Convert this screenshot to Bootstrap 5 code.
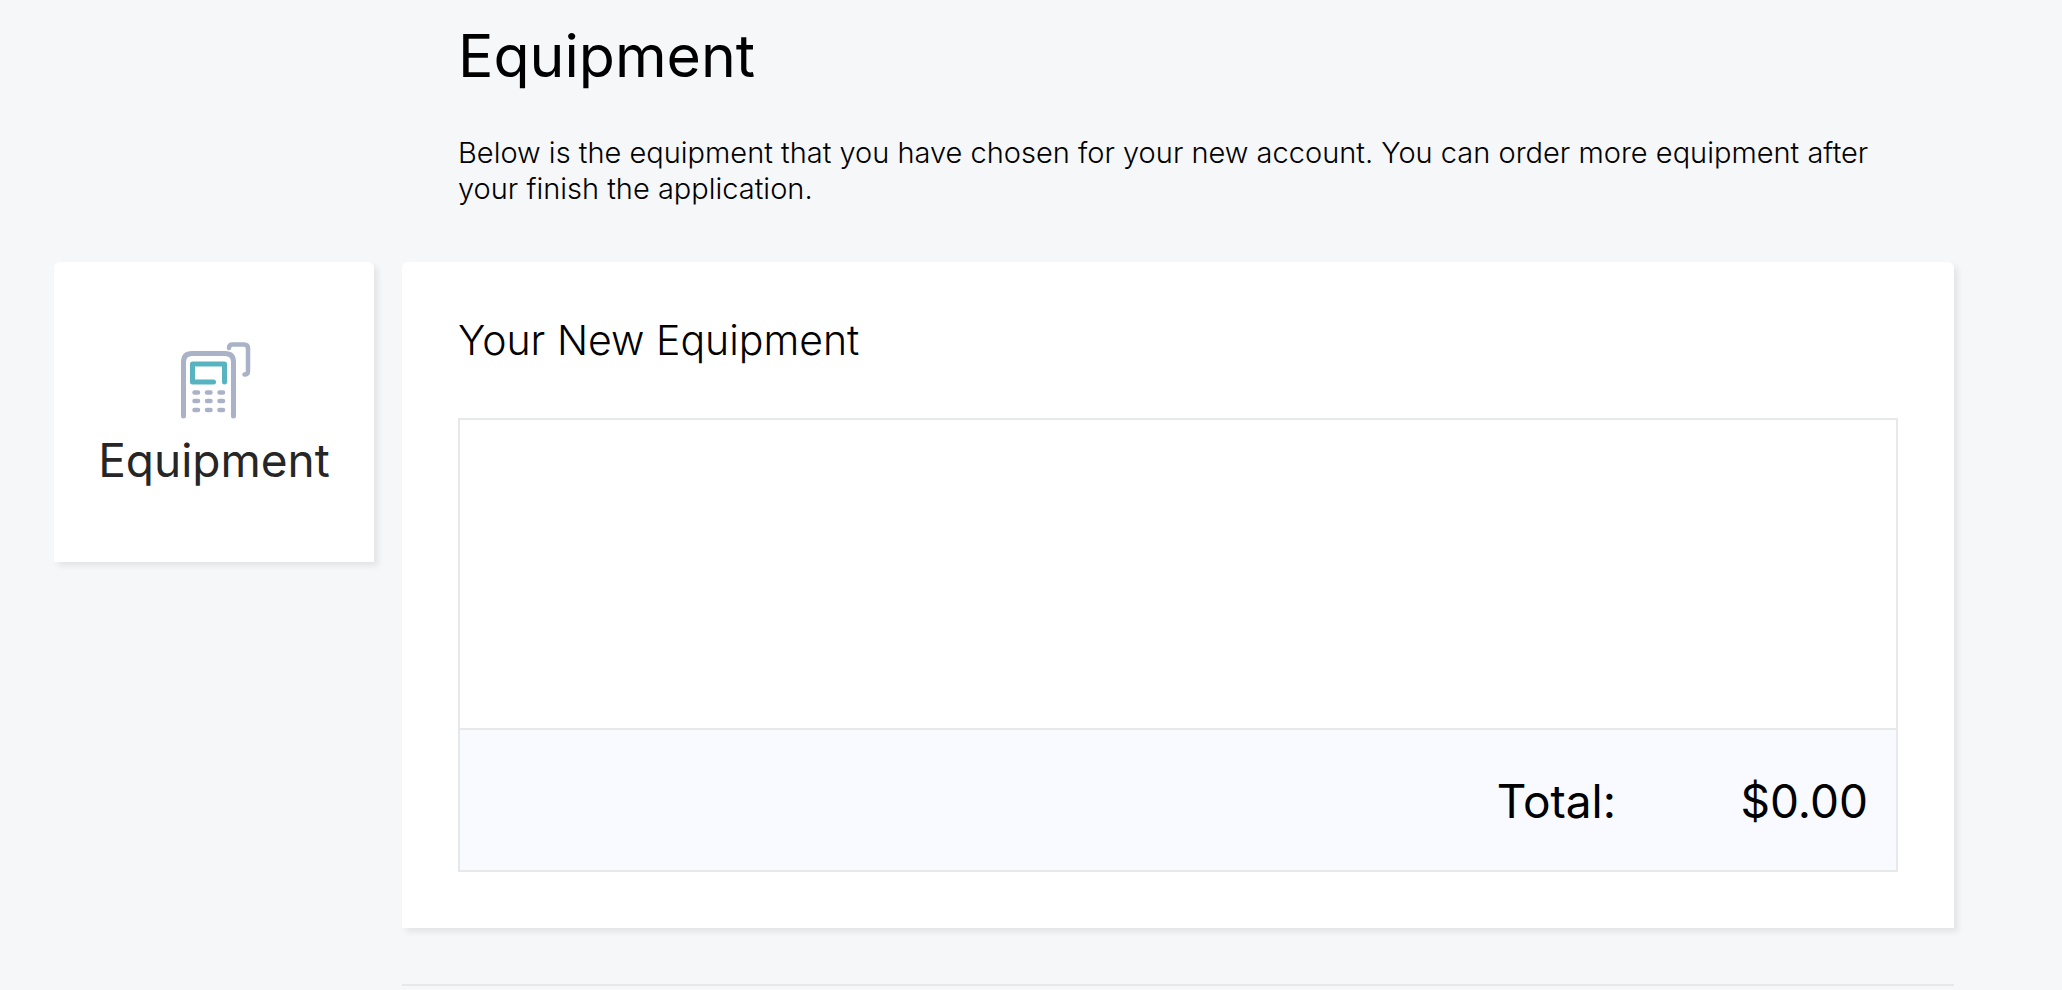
<!DOCTYPE html>
<html lang="en">
<head>
<meta charset="utf-8">
<meta name="viewport" content="width=device-width, initial-scale=1">
<title>Equipment</title>
<link rel="stylesheet" href="https://cdn.jsdelivr.net/npm/bootstrap@5.3.0/dist/css/bootstrap.min.css">
<style>
  body { background: #f5f7f9; color: #000; font-family: Inter, "Liberation Sans", sans-serif; font-weight: 300; }
  .page { padding: 20px 108px 0 54px; }
  .side-col { width: 320px; }
  .layout { gap: 28px; }
  .intro { padding: 0 56px; }
  .page-title { font-size: 59px; line-height: 72px; font-weight: 400; }
  .intro-text { font-size: 29px; line-height: 36px; margin-top: 43px; margin-bottom: 55px; }
  .panel { background: #fff; border-radius: 6px 6px 0 0; box-shadow: 4px 4px 6px rgba(0, 0, 0, .08); }
  .side-panel { height: 300px; padding-top: 6px; gap: 12px; color: #262626; font-size: 46px; line-height: 56px; font-weight: 400; }
  .main-panel { padding: 54px 56px 56px; }
  .panel-title { font-size: 41px; line-height: 48px; font-weight: 300; margin-bottom: 54px; }
  .order { border: 2px solid #e7e8ea; border-collapse: collapse; }
  .order .items td { height: 310px; }
  .order .total { height: 142px; border-top: 2px solid #e7e8ea; background: #f8faff; font-size: 46px; font-weight: 400; }
  .order .total th { font-weight: 400; padding-top: 4px; text-align: right; }
  .order .total td { width: 280px; padding-top: 4px; padding-right: 28px; text-align: right; }
  .rule { margin: 56px 0 0; border-top: 2px solid #e7e8ea; opacity: 1; }
</style>
</head>
<body>
<main class="page">
  <div class="layout d-flex">
    <div class="side-col flex-shrink-0"></div>
    <header class="intro flex-grow-1">
      <h1 class="page-title mb-0">Equipment</h1>
      <p class="intro-text">Below is the equipment that you have chosen for your new account. You can order more equipment after your finish the application.</p>
    </header>
  </div>
  <div class="layout d-flex align-items-start">
    <aside class="side-col side-panel panel flex-shrink-0 d-flex flex-column align-items-center justify-content-center">
      <svg width="74" height="78" viewBox="-4 0 74 78" fill="none" stroke="#aab2c8" stroke-width="5" stroke-linecap="round" aria-hidden="true">
        <path d="M2.500 74V20Q2.500 11.500 11 11.500H44Q52.500 11.500 52.500 20V74"/>
        <path stroke-width="4.500" d="M48 6Q48 2.500 51.500 2.500H63Q67 2.500 67 6.500V29Q67 32.500 63.500 32.500"/>
        <path stroke="#57b3c0" stroke-linejoin="round" d="M43.500 40V22H11.500V40H32.500"/>
        <path stroke-width="4.500" d="M13.500 50.500h3.500M26 50.500h3.500M38.500 50.500h3.500M13.500 59h3.500M26 59h3.500M38.500 59h3.500M13.500 68h3.500M26 68h3.500M38.500 68h3.500"/>
      </svg>
      <div>Equipment</div>
    </aside>
    <div class="flex-grow-1">
      <section class="main-panel panel">
        <h2 class="panel-title">Your New Equipment</h2>
        <table class="order w-100">
          <tbody>
            <tr class="items"><td colspan="2"></td></tr>
            <tr class="total"><th scope="row">Total:</th><td>$0.00</td></tr>
          </tbody>
        </table>
      </section>
      <hr class="rule">
    </div>
  </div>
</main>
<script src="https://cdn.jsdelivr.net/npm/bootstrap@5.3.0/dist/js/bootstrap.bundle.min.js"></script>
</body>
</html>
